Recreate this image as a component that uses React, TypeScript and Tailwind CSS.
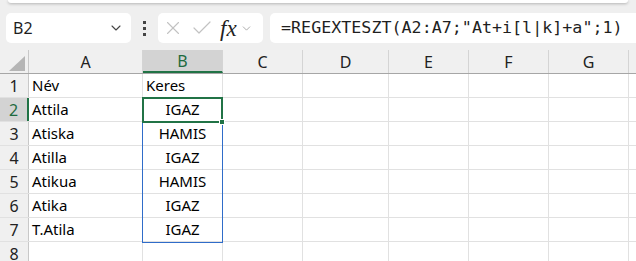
import { ChevronDown, X, Check } from "lucide-react";

const colWidths = ["w-[29px]", "w-[114px]", "w-[80px]", "w-[80px]", "w-[86px]", "w-[80px]", "w-[80px]", "w-[80px]", "flex-1"];
const letters = ["A", "B", "C", "D", "E", "F", "G", ""];

const rows: [string, string, string][] = [
  ["1", "Név", "Keres"],
  ["2", "Attila", "IGAZ"],
  ["3", "Atiska", "HAMIS"],
  ["4", "Atilla", "IGAZ"],
  ["5", "Atikua", "HAMIS"],
  ["6", "Atika", "IGAZ"],
  ["7", "T.Atila", "IGAZ"],
  ["8", "", ""],
];

const ui = { fontFamily: '"Noto Sans", "Open Sans", sans-serif' };

function Toolbar() {
  return (
    <div className="h-[50px] bg-[#efefef]">
      <div className="mx-[8px] h-[3px] rounded-b-[6px] bg-white shadow-[0_1px_3px_rgba(0,0,0,0.25)]" />
      <div className="mt-[10px] flex h-[30px] items-stretch">
        <div className="ml-[6px] flex w-[125px] items-center rounded-[5px] bg-white pl-[7px] pr-[7px] text-[16px] text-[#1f1f1f]">
          <span className="flex-1">B2</span>
          <ChevronDown className="h-[16px] w-[16px] text-[#444]" strokeWidth={1.6} />
        </div>
        <div className="flex w-[27px] flex-col items-center justify-center gap-[3px]">
          <span className="h-[3px] w-[3px] bg-[#444]" />
          <span className="h-[3px] w-[3px] bg-[#444]" />
          <span className="h-[3px] w-[3px] bg-[#444]" />
        </div>
        <div className="flex w-[105px] items-center rounded-[5px] bg-white pl-[4px]">
          <X className="h-[22px] w-[22px] text-[#c2c2c2]" strokeWidth={1.2} />
          <Check className="ml-[6px] h-[24px] w-[24px] text-[#c2c2c2]" strokeWidth={1.2} />
          <span
            className="ml-[6px] text-[23px] italic leading-none text-[#222]"
            style={{ fontFamily: '"Liberation Serif", "DejaVu Serif", serif' }}
          >
            fx
          </span>
          <ChevronDown className="ml-[3px] h-[13px] w-[13px] text-[#9a9a9a]" strokeWidth={1.5} />
        </div>
        <div
          className="ml-[7px] flex flex-1 items-center rounded-l-[5px] bg-white pl-[11px] text-[16.7px] text-[#1f1f1f]"
          style={{ fontFamily: '"DejaVu Sans Mono", "Liberation Mono", monospace' }}
        >
          =REGEXTESZT(A2:A7;"At+i[l|k]+a";1)
        </div>
      </div>
    </div>
  );
}

function HeaderRow() {
  return (
    <div className="flex h-[24px] border-b border-[#a6a6a6] bg-[#f0f0f0]">
      <div className={`${colWidths[0]} relative shrink-0 border-r border-[#c8c8c8]`}>
        <svg className="absolute left-0 top-0" width="28" height="23" viewBox="0 0 28 23">
          <polygon points="9,21 25,21 25,6" fill="#b5b5b5" />
        </svg>
      </div>
      {letters.map((l, i) => {
        const sel = l === "B";
        return (
          <div
            key={i}
            className={`${colWidths[i + 1]} flex shrink-0 items-center justify-center text-[16px] ${
              i < 7 ? "border-r border-[#d4d4d4]" : ""
            } ${sel ? "border-b-2 border-b-[#217346] bg-[#d3d3d3] text-[#1e6b3f]" : "text-[#222]"}`}
          >
            {l}
          </div>
        );
      })}
    </div>
  );
}

export default function App() {
  return (
    <div className="h-[261px] w-[636px] overflow-hidden bg-white" style={ui}>
      <Toolbar />
      <div className="relative">
        <HeaderRow />
        {rows.map(([n, a, b]) => {
          const sel = n === "2";
          return (
            <div key={n} className="flex h-[24px] border-b border-[#e1e1e1]">
              <div
                className={`${colWidths[0]} flex shrink-0 items-center justify-center text-[16px] ${
                  sel
                    ? "border-r-2 border-r-[#217346] bg-[#d3d3d3] text-[#1e6b3f]"
                    : "border-r border-[#c8c8c8] bg-[#f0f0f0] text-[#222]"
                }`}
              >
                {n}
              </div>
              <div className={`${colWidths[1]} flex shrink-0 items-end border-r border-[#e1e1e1] pb-[1px] pl-[3px] text-[15px] text-black`}>
                {a}
              </div>
              <div
                className={`${colWidths[2]} flex shrink-0 items-end border-r border-[#e1e1e1] pb-[1px] text-[15px] text-black ${
                  n === "1" ? "pl-[3px]" : "justify-center"
                }`}
              >
                {b}
              </div>
              {colWidths.slice(3).map((w, i) => (
                <div key={i} className={`${w} shrink-0 ${i < 5 ? "border-r border-[#e1e1e1]" : ""}`} />
              ))}
            </div>
          );
        })}
        {/* spill range outline B2:B7 */}
        <div className="pointer-events-none absolute left-[142px] top-[48px] h-[145px] w-[81px] border border-[#2f6cc9]" />
        {/* active cell B2 */}
        <div className="pointer-events-none absolute left-[142px] top-[47px] h-[26px] w-[81px] border-2 border-[#217346]" />
        <div className="pointer-events-none absolute left-[219px] top-[69px] h-[6px] w-[6px] border border-white bg-[#217346]" />
      </div>
    </div>
  );
}
